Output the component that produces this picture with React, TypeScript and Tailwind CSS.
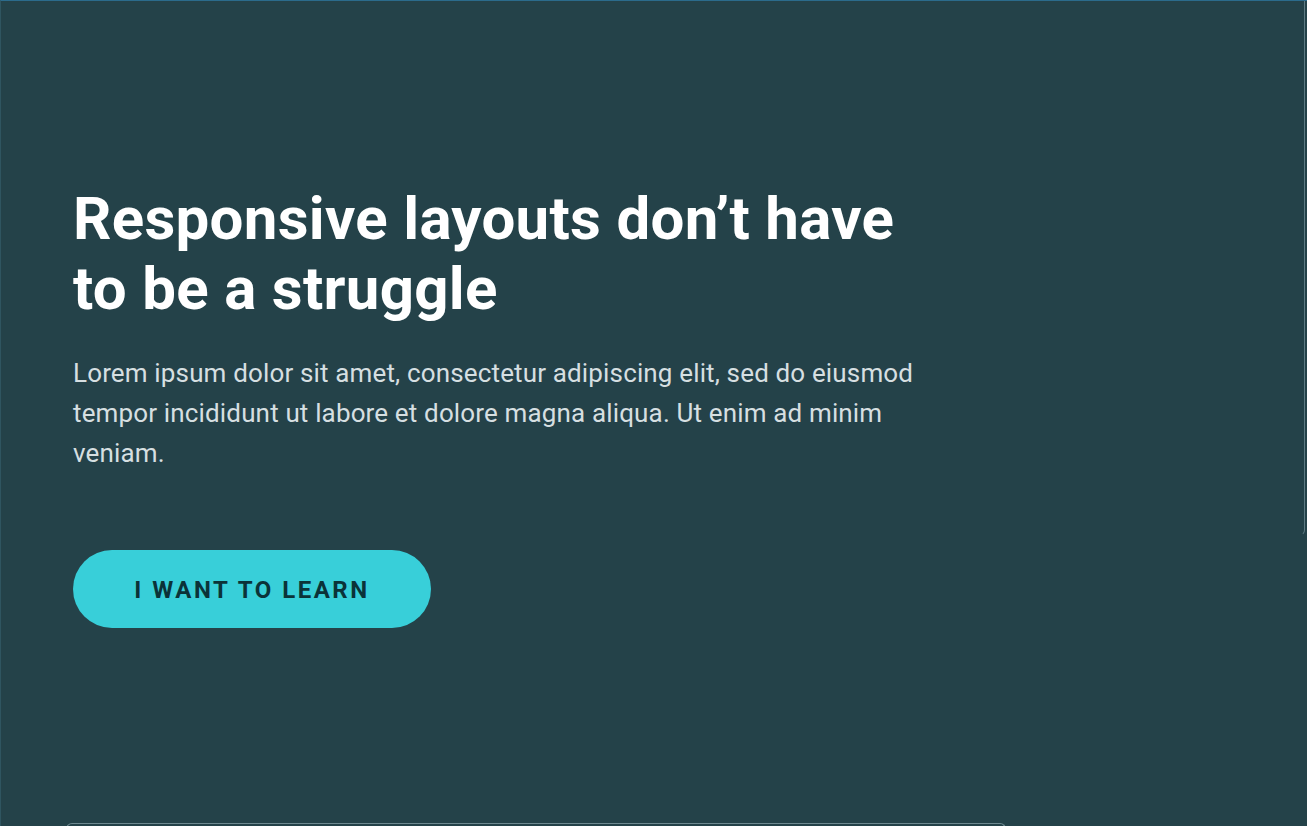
import React from "react";

export default function App() {
  return (
    <div
      className="relative h-[826px] w-full overflow-hidden bg-[#244249] border-t border-t-[#2b6b8c] border-l border-l-[#2f5560]"
      style={{ fontFamily: "Roboto, 'Liberation Sans', sans-serif" }}
    >
      <div className="pl-[72px] pt-[183px] max-w-[940px]">
        <h1 className="text-[60px] leading-[70px] font-bold text-white tracking-[0.3px]">
          Responsive layouts don’t have to be a struggle
        </h1>
        <p className="mt-[29px] text-[26px] leading-[40px] tracking-[0.15px] text-[#d6dfe1] max-w-[860px]">
          Lorem ipsum dolor sit amet, consectetur adipiscing elit, sed do eiusmod tempor incididunt ut labore et dolore magna aliqua. Ut enim ad minim veniam.
        </p>
        <button className="mt-[77px] h-[78px] w-[358px] rounded-full bg-[#38cfd9] pt-[2px] text-[24px] font-bold tracking-[2.5px] text-[#0b3338]">
          I WANT TO LEARN
        </button>
      </div>
      <div className="absolute right-[2px] top-0 h-[535px] w-[8px] rounded-br-[6px] border-r border-b border-[#5f7c84]" style={{ borderBottomColor: "transparent" }} />
      <div className="absolute left-[65px] top-[822px] h-[20px] w-[940px] rounded-t-[6px] border-t border-l border-r border-[#6e8990]" />
    </div>
  );
}
